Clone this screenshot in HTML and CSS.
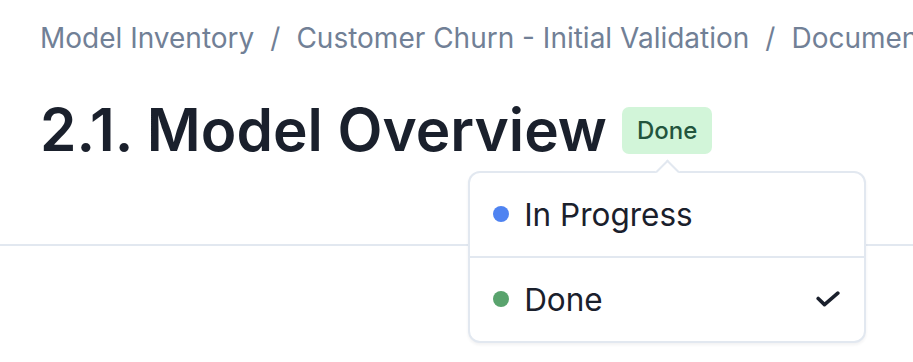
FILE: index.html
```html
<!DOCTYPE html>
<html lang="en">
<head>
<meta charset="utf-8">
<title>2.1. Model Overview</title>
<link rel="stylesheet" href="styles.css">
</head>
<body>
  <main class="page">
    <header class="page-header">
      <nav class="breadcrumb">
        <span class="crumb">Model Inventory</span>
        <span class="sep">/</span>
        <span class="crumb">Customer Churn - Initial Validation</span>
        <span class="sep">/</span>
        <span class="crumb">Documentation</span>
      </nav>
      <div class="title-row">
        <h1 class="title">2.1. Model Overview</h1>
        <div class="status">
          <span class="badge">Done</span>
          <div class="popover">
            <span class="arrow"></span>
            <ul class="menu">
              <li class="menu-item">
                <span class="dot dot-blue"></span>
                <span class="label">In Progress</span>
              </li>
              <li class="menu-item">
                <span class="dot dot-green"></span>
                <span class="label">Done</span>
                <svg class="check" viewBox="0 0 24 16" width="24" height="16" aria-hidden="true">
                  <polyline points="2.2,7.5 8.5,13.6 21.8,2.2" fill="none" stroke="#1a202c" stroke-width="3.6" stroke-linecap="round" stroke-linejoin="round"/>
                </svg>
              </li>
            </ul>
          </div>
        </div>
      </div>
    </header>
  </main>
</body>
</html>
```

FILE: styles.css
```css
html, body {
  margin: 0;
  padding: 0;
  background: #ffffff;
}

body {
  font-family: Inter, "Noto Sans", "Liberation Sans", sans-serif;
  color: #1a202c;
  min-height: 362px;
}

.page {
  min-height: 362px;
}

.page-header {
  padding: 18px 0 79px 40px;
  border-bottom: 2px solid #e2e8f0;
}

.breadcrumb {
  display: flex;
  white-space: nowrap;
  overflow: hidden;
  font-size: 28px;
  line-height: 40px;
  color: #718096;
}

.sep {
  margin: 0 16px;
}

.title-row {
  display: flex;
  align-items: center;
  gap: 15px;
  margin-top: 37px;
}

.title {
  margin: 0;
  font-size: 58.5px;
  line-height: 70px;
  font-weight: 600;
  color: #1a202c;
}

.status {
  position: relative;
}

.badge {
  display: inline-flex;
  align-items: center;
  height: 47px;
  padding: 0 15px;
  border-radius: 7px;
  background: #d2f5d9;
  color: #22543d;
  font-size: 24px;
  font-weight: 500;
}

.popover {
  position: absolute;
  top: calc(100% + 17px);
  left: 50%;
  transform: translateX(-50%);
  width: 398px;
  z-index: 2;
}

.arrow {
  position: absolute;
  top: -8px;
  left: 50%;
  width: 15px;
  height: 15px;
  margin-left: -8.5px;
  background: #fff;
  border-top: 2px solid #e2e8f0;
  border-left: 2px solid #e2e8f0;
  transform: rotate(45deg);
  z-index: 1;
}

.menu {
  list-style: none;
  margin: 0;
  padding: 0;
  background: #fff;
  border: 2px solid #e2e8f0;
  border-radius: 12px;
  box-shadow: 0 2px 3px rgba(26, 32, 44, 0.06);
}

.menu-item {
  display: flex;
  align-items: center;
  height: 83px;
  padding: 0 24px 0 23px;
  font-size: 31.5px;
  color: #1a202c;
}

.menu-item + .menu-item {
  border-top: 2px solid #e2e8f0;
}

.dot {
  width: 16px;
  height: 16px;
  border-radius: 50%;
  margin-right: 15px;
  flex: none;
}

.dot-blue {
  background: #4f83f1;
}

.dot-green {
  background: #59a36d;
}

.label {
  flex: 1;
}

.check {
  flex: none;
  display: block;
}
```
